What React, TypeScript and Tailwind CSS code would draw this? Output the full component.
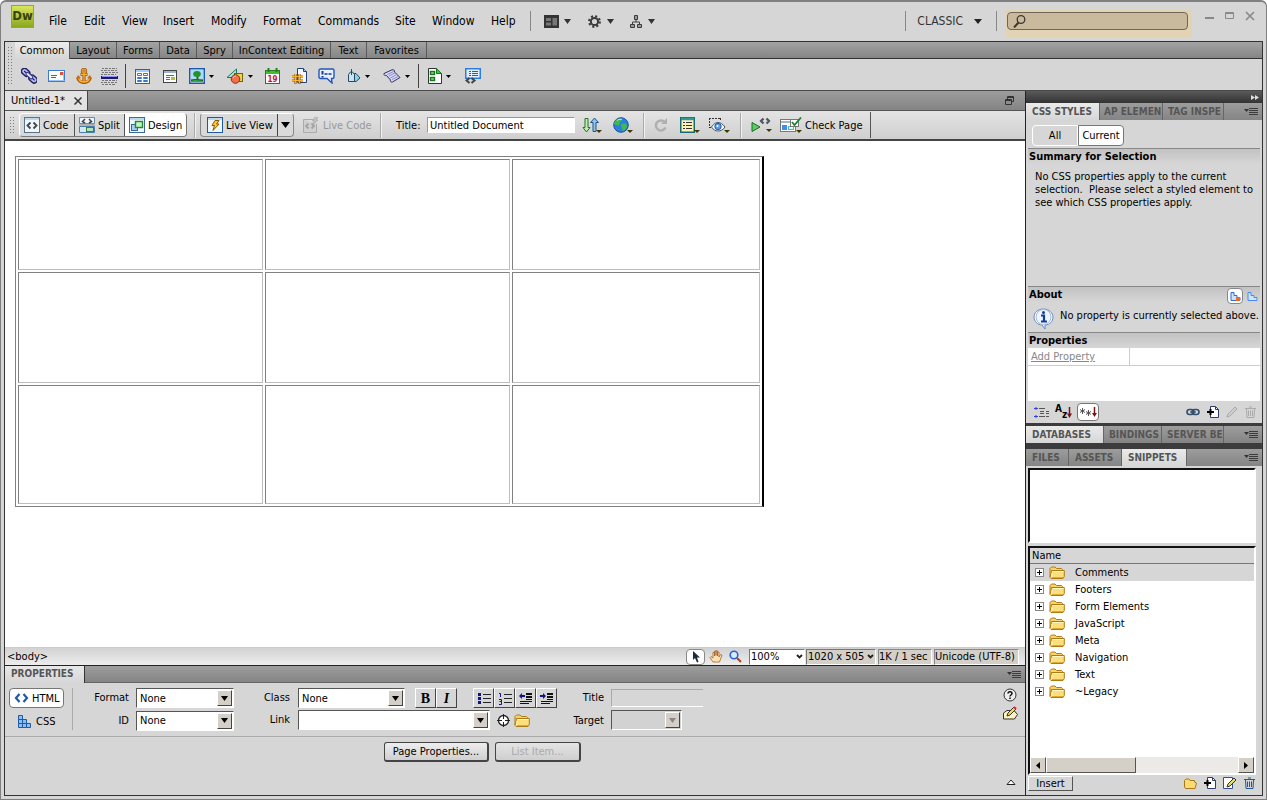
import { useState } from 'react'
import type { ReactNode } from 'react'

// ── Small building blocks ──────────────────────────────────────────────────

function Svg({ w, h, children, className = '' }: { w: number; h: number; children: ReactNode; className?: string }) {
  return (
    <svg width={w} height={h} viewBox={`0 0 ${w} ${h}`} fill="none" aria-hidden="true" className={`shrink-0 ${className}`}>
      {children}
    </svg>
  )
}

function Caret({ color = '#222', w = 7 }: { color?: string; w?: number }) {
  return (
    <Svg w={w} h={5}>
      <path d={`M0 0H${w}L${w / 2} 5Z`} fill={color} />
    </Svg>
  )
}

function Grip({ className }: { className: string }) {
  return <div className={`w-[6px] shrink-0 bg-[radial-gradient(circle,#7c7c7c_1px,transparent_1px)] bg-[size:3px_3px] ${className}`} />
}

function MenuLines() {
  return (
    <button type="button" aria-label="Panel menu" className="flex h-full w-[18px] shrink-0 items-center">
      <Svg w={15} h={9}>
        <path d="M0 2h5L2.5 5Z" fill="#333" />
        <path d="M5 1.5h9M5 3.5h9M5 5.5h9M5 7.5h9" stroke="#3c3c3c" />
      </Svg>
    </button>
  )
}

function Folder() {
  return (
    <Svg w={16} h={13}>
      <path d="M1 11V2.5L2.5 1H6l1.5 1.5h5L13.5 3.5V5" fill="#f7d469" stroke="#b17c14" />
      <path d="M1 11.5L2.5 4.5H15.3V10.5L14 12.5H2Z" fill="#fbdf7c" stroke="#b07a12" />
      <path d="M3.5 5.5h11M3 7v4" stroke="#fff6c9" />
      <path d="M3 11.5h11" stroke="#e0a92f" />
    </Svg>
  )
}

// ── Insert bar icons ───────────────────────────────────────────────────────

const LinkIcon = () => (
  <Svg w={16} h={16}>
    <g transform="rotate(42 8 8)">
      <rect x="-1.5" y="4.5" width="9" height="6" rx="3" fill="#b9bdf0" stroke="#20225e" strokeWidth="1.5" />
      <rect x="8.5" y="4.5" width="9" height="6" rx="3" fill="#b9bdf0" stroke="#20225e" strokeWidth="1.5" />
      <path d="M1 7.5h4M11 7.5h4" stroke="#20225e" strokeWidth="1.2" />
      <rect x="4" y="6" width="8" height="3" rx="1.5" fill="#e6e8ff" stroke="#33368c" />
    </g>
  </Svg>
)

const MailIcon = () => (
  <Svg w={17} h={12}>
    <rect x=".5" y=".5" width="16" height="11" fill="#fff" stroke="#3c7bd0" />
    <path d="M1 10.5h15.5M15.5 2v9" stroke="#9cc4f0" />
    <path d="M3 5.5h6M3 7.5h5" stroke="#3867ae" />
    <rect x="12" y="2" width="3" height="3" fill="#e8502a" />
  </Svg>
)

const AnchorIcon = () => (
  <Svg w={16} h={16}>
    <path d="M8 5v9M4.5 6.5h7M2 9.5c0 3 2.5 5 6 5s6-2 6-5" stroke="#a85708" strokeWidth="3.2" />
    <circle cx="8" cy="3" r="2" stroke="#a85708" strokeWidth="2.4" />
    <path d="M8 5v9M5 6.5h6M2.5 10c.5 2.5 2.5 4 5.5 4s5-1.500 5.500-4" stroke="#fbb034" strokeWidth="1.3" />
    <circle cx="8" cy="3" r="2" stroke="#fbb034" />
    <path d="M0 11l2-4 3 3ZM16 11l-2-4-3 3Z" fill="#c56c0c" />
  </Svg>
)

const RuleIcon = () => (
  <Svg w={17} h={17}>
    <path d="M1 .5h15M0 2.5h16M1 4.5h16M0 6.5h15M1 12.5h15M0 14.5h16M1 16.5h14" stroke="#777" strokeDasharray="2 1 3 1" />
    <rect y="8" width="17" height="3" fill="#1b1b6c" />
    <path d="M1 8.5h15" stroke="#8f8ff0" />
  </Svg>
)

const TableIcon = () => (
  <Svg w={15} h={15}>
    <rect x=".5" y=".5" width="14" height="14" fill="#fff" stroke="#2a62a6" />
    <path d="M1 2h13" stroke="#a9cdf2" strokeWidth="2" />
    <path d="M2.5 4.5h4v2h-4ZM8.5 4.5h4v2h-4ZM2.5 8.5h4v1h-4ZM8.5 8.5h4v1h-4ZM2.5 11.5h4v1h-4ZM8.5 11.5h4v1h-4Z" stroke="#3a78c4" />
  </Svg>
)

const DivIcon = () => (
  <Svg w={14} h={13}>
    <rect x=".5" y=".5" width="13" height="12" fill="#fff" stroke="#444" />
    <path d="M1 2h12" stroke="#9cb4cc" strokeWidth="2" />
    <path d="M3 5.5h8M3 7.5h4M3 9.5h4" stroke="#4a6b94" />
    <rect x="8" y="7" width="4" height="3" fill="#a6c436" />
  </Svg>
)

const ImageIcon = () => (
  <Svg w={16} h={16}>
    <rect x=".75" y=".75" width="14.5" height="14.5" fill="#fff" stroke="#1c57b0" strokeWidth="1.5" />
    <rect x="2" y="2" width="12" height="12" fill="#a8dcf8" />
    <path d="M2 11h12v3H2Z" fill="#31b03a" />
    <path d="M7.5 8h2v4h-2Z" fill="#6b4a1c" />
    <ellipse cx="8" cy="6" rx="3.8" ry="3" fill="#23922d" />
    <path d="M2 12.5l4-1 8 1" stroke="#146e1b" />
  </Svg>
)

const MediaIcon = () => (
  <Svg w={18} h={16}>
    <path d="M1 9.5L10.5 1v8.5Z" fill="#a9ecd2" stroke="#18775d" />
    <rect x="8.5" y="5.5" width="8" height="8" fill="#f0d74c" stroke="#6c6410" />
    <circle cx="9.5" cy="11" r="4.3" fill="#f26f4a" stroke="#8c2c14" />
    <path d="M7 10a3 3 0 0 1 3-2" stroke="#ffc2ae" />
  </Svg>
)

const DateIcon = () => (
  <Svg w={15} h={16}>
    <rect x=".5" y="2.5" width="14" height="13" fill="#fff" stroke="#2a7a1f" />
    <rect x="1" y="3" width="13" height="3" fill="#3fc02c" />
    <path d="M3.5 0v4M11.5 0v4" stroke="#2a7a1f" strokeWidth="2" />
    <text x="7.5" y="14" textAnchor="middle" fontSize="8" fontWeight="700" fill="#d21414" fontFamily="DejaVu Sans Condensed, sans-serif">
      19
    </text>
  </Svg>
)

const IncludeIcon = () => (
  <Svg w={15} h={16}>
    <path d="M5.5.5h6l3 3v11h-9Z" fill="#f3f7ff" stroke="#22407c" />
    <path d="M11.5.5v3h3" fill="#9cc0ee" stroke="#22407c" />
    <path d="M3.5 6v10M7.5 6v10M0 8.5h11M0 12.5h11" stroke="#9a5a00" strokeWidth="2.2" />
    <path d="M3.5 6v9.5M7.5 6v9.5M0 8.5h11M0 12.5h11" stroke="#f9b338" />
  </Svg>
)

const CommentIcon = () => (
  <Svg w={17} h={16}>
    <path d="M2.5 1h12Q16 1 16 2.5v6Q16 10.5 14.5 10.5h-1l.5 4.5-5-4.5H2.5Q1 10.5 1 9V2.5Q1 1 2.5 1Z" fill="#e6f0ff" stroke="#2356b8" strokeWidth="1.4" />
    <path d="M4.5 3v3.500M4.5 8v1.5" stroke="#123a94" strokeWidth="2" />
    <path d="M6.5 6h3M10.5 6h3" stroke="#123a94" strokeWidth="1.6" />
  </Svg>
)

const HeadIcon = () => (
  <Svg w={13} h={14}>
    <path d="M.5 5.5L2.5 3h2l2 2.5v7h-6Z" fill="#c6e6f6" stroke="#26495e" />
    <path d="M3.5 0v6" stroke="#26495e" />
    <path d="M6.5 4.5H8L12 9l-4 3.5H6.5Z" fill="#8fd0ee" stroke="#26495e" />
  </Svg>
)

const ScriptIcon = () => (
  <Svg w={18} h={14}>
    <path d="M1 4.5L9 .8c2-.5 3 1 2.5 2.2L17 8.5 9.5 13c-2 .5-2.5-1-2-2L3.5 6.5C2 7 .5 6 1 4.5Z" fill="#d5d6f6" stroke="#303258" />
    <path d="M4.5 5.5l6-3M6 7l6-3.2M7.5 9l6-3.5M9 10.5l6-3" stroke="#7a7cba" strokeWidth=".8" />
  </Svg>
)

const TemplateIcon = () => (
  <Svg w={14} h={16}>
    <path d="M.5.5h8l5 5v10H.5Z" fill="#fff" stroke="#333" />
    <path d="M8.5.5v5h5Z" fill="#45c14a" stroke="#17761c" />
    <rect x="2.5" y="3.5" width="4" height="3" fill="#7ddc7f" stroke="#17761c" strokeWidth="1.4" />
    <rect x="2.5" y="9.5" width="4" height="3" fill="#7ddc7f" stroke="#17761c" strokeWidth="1.4" />
  </Svg>
)

const TagIcon = () => (
  <Svg w={16} h={16}>
    <rect x=".75" y=".75" width="14.5" height="9.5" fill="#e4f2ff" stroke="#2b7de0" strokeWidth="1.5" />
    <path d="M4 3.5h2M7 3.5h6M4 5.5h2M7 5.5h6M4 7.5h2M7 7.5h6" stroke="#2a5da0" />
    <path d="M4.5 10L1.5 12.5l3 2.5M6.5 10l3 2.5-3 2.5" stroke="#444" strokeWidth="2" />
  </Svg>
)

// ── Document toolbar icons ─────────────────────────────────────────────────

function Page({ children, stroke = '#3a6a96' }: { children: ReactNode; stroke?: string }) {
  return (
    <Svg w={16} h={16}>
      <rect x=".5" y=".5" width="15" height="15" fill="#eef6fc" stroke={stroke} />
      <path d="M1 2h14" stroke="#bcd9ee" strokeWidth="2" />
      {children}
    </Svg>
  )
}

const CodeIcon = () => (
  <Page stroke="#58748c">
    <path d="M6.5 5.5L3.5 8.5l3 3M9.5 5.5l3 3-3 3" stroke="#444" strokeWidth="1.8" />
  </Page>
)

const LiveCodeIcon = () => (
  <Svg w={16} h={16}>
    <path d="M.5 2.5h10M13.5 7v8.5H.5v-13" fill="#d0d0d0" stroke="#aaa" />
    <path d="M5.5 6.5L3 9l2.5 2.5M8.5 6.5L11 9l-2.5 2.5" stroke="#a2a2a2" strokeWidth="1.8" />
    <path d="M12 0L9.5 4h2L10 7.5 15 3h-2l2-3Z" fill="#c4c4c4" stroke="#aaa" strokeWidth=".8" />
  </Svg>
)

const SplitIcon = () => (
  <Svg w={16} h={16}>
    <path d="M.5.5h15v6H.5Z" fill="#eaf4fa" stroke="#6b8ca5" />
    <path d="M6 2L3.5 4.5 6 6M10 2l2.5 2.5L10 6" stroke="#444" strokeWidth="1.5" />
    <path d="M.5 9.5h15v6H.5Z" fill="#d6e8f6" stroke="#4b7fae" />
    <rect x="7.5" y="10.5" width="7" height="4" fill="#b6e2b4" stroke="#2c8b37" />
    <path d="M0 8h16" stroke="#888" />
  </Svg>
)

const DesignIcon = () => (
  <Page>
    <rect x="2.5" y="7.5" width="6" height="6" fill="#a9cdef" stroke="#2f69a5" />
    <rect x="6.5" y="4.5" width="7" height="6" fill="#c9efc4" stroke="#1d8a2b" strokeWidth="1.4" />
  </Page>
)

const LiveIcon = () => (
  <Page stroke="#1d5c9a">
    <path d="M8 3.5L5 8.5h2.5L6 13.5 12 7H9.5L12 3.5Z" fill="#ffc92e" stroke="#8b5a00" />
  </Page>
)

const Drop = () => <path d="M0 0h6L3 3Z" fill="#3f3a00" />

const TransferIcon = () => (
  <Svg w={20} h={17}>
    <path d="M3 1.5h3v9h2L4.5 15 1 10.5h2Z" fill="#bff0b0" stroke="#27702a" />
    <path d="M11 14.5h3v-9h2.5L12.5 1 8.5 5.5H11Z" fill="#8ec3ee" stroke="#22568c" />
    <g transform="translate(14 13)">
      <Drop />
    </g>
  </Svg>
)

const GlobeIcon = () => (
  <Svg w={20} h={17}>
    <circle cx="8" cy="8" r="7.3" fill="#2c7fe0" stroke="#1c4fa0" />
    <path d="M3 3c3-2 6-1 6 0S6 5 6.5 7 4 8 2 7.5 1.5 5 3 3ZM9 7c3-1 5 0 5 2s-3 5-4 5-.5-2.5-1.5-4S8 7.5 9 7Z" fill="#3fbb48" />
    <path d="M4 3.5c2-1.5 4-1.5 5-1" stroke="#bfeaff" />
    <g transform="translate(14 13)">
      <Drop />
    </g>
  </Svg>
)

const RefreshIcon = () => (
  <Svg w={14} h={14}>
    <path d="M10.5 4A5 5 0 1 0 11.5 9.5" stroke="#b0b0b0" strokeWidth="2.5" />
    <path d="M13 0v6H7Z" fill="#b0b0b0" />
  </Svg>
)

const OptionsIcon = () => (
  <Svg w={20} h={17}>
    <rect x=".75" y=".75" width="13.5" height="14.5" fill="#fff2b8" stroke="#176b70" strokeWidth="1.5" />
    <path d="M1 2h13" stroke="#2f9a9c" strokeWidth="2.5" />
    <path d="M3 5.5h2M3 8.5h2M3 11.5h2M6 5.5h6M6 8.5h6M6 11.5h6" stroke="#333" strokeWidth="1.2" />
    <g transform="translate(14 13)">
      <Drop />
    </g>
  </Svg>
)

const AidsIcon = () => (
  <Svg w={22} h={17}>
    <path d="M1 1.5h12M1.5 1v10M12.5 1v3M1 10.5h3" stroke="#333" strokeDasharray="2 1" />
    <path d="M3.5 10C6 6.5 8 5.5 10 5.5s5 1.5 7 4.5c-2 3-4.5 4-7 4s-4.5-1-6.5-4Z" fill="#fff" stroke="#42515f" />
    <circle cx="10" cy="9.5" r="3.2" fill="#5aa0f0" stroke="#2457a8" />
    <circle cx="9.5" cy="9" r="1" fill="#fff" />
    <g transform="translate(16 13)">
      <Drop />
    </g>
  </Svg>
)

const ValidateIcon = () => (
  <Svg w={21} h={16}>
    <path d="M1 5.5l8 4.5-8 4.5Z" fill="#59cd5f" stroke="#1a6a22" />
    <path d="M12.5 1.5L10 4l2.5 2.5M15.5 1.5L18 4l-2.5 2.5" stroke="#4c5560" strokeWidth="2.2" />
    <g transform="translate(15 12)">
      <Drop />
    </g>
  </Svg>
)

const CheckPageIcon = () => (
  <Svg w={22} h={17}>
    <rect x=".5" y="2.5" width="15" height="12" fill="#fff" stroke="#777" />
    <path d="M1 5h14" stroke="#a5b5c2" strokeWidth="2" />
    <rect x="2" y="8" width="5" height="5" fill="#3f8ff0" />
    <rect x="8.5" y="9.5" width="5" height="3" fill="#e8fbff" stroke="#43b4e0" />
    <rect x="10.5" y="2.5" width="8" height="7" fill="#fff" stroke="#777" />
    <path d="M12 5l2.5 3L21 .5" stroke="#18862b" strokeWidth="1.8" />
    <g transform="translate(16 13)">
      <Drop />
    </g>
  </Svg>
)

// ── Data ───────────────────────────────────────────────────────────────────

const MENUS = [
  { label: 'File', width: 'w-[35px]' },
  { label: 'Edit', width: 'w-[38px]' },
  { label: 'View', width: 'w-[41px]' },
  { label: 'Insert', width: 'w-[48px]' },
  { label: 'Modify', width: 'w-[52px]' },
  { label: 'Format', width: 'w-[55px]' },
  { label: 'Commands', width: 'w-[77px]' },
  { label: 'Site', width: 'w-[37px]' },
  { label: 'Window', width: 'w-[59px]' },
  { label: 'Help', width: 'w-[39px]' },
]

const INSERT_TABS = [
  { label: 'Common', width: 'w-[55px]' },
  { label: 'Layout', width: 'w-[47px]' },
  { label: 'Forms', width: 'w-[43px]' },
  { label: 'Data', width: 'w-[37px]' },
  { label: 'Spry', width: 'w-[36px]' },
  { label: 'InContext Editing', width: 'w-[98px]' },
  { label: 'Text', width: 'w-[36px]' },
  { label: 'Favorites', width: 'w-[60px]' },
]

const INSERT_ITEMS = [
  { label: 'Hyperlink', icon: <LinkIcon />, width: 'w-[27px]' },
  { label: 'Email link', icon: <MailIcon />, width: 'w-[28px]' },
  { label: 'Named anchor', icon: <AnchorIcon />, width: 'w-[25px]' },
  { label: 'Horizontal rule', icon: <RuleIcon />, width: 'w-[24px]' },
  { label: 'Table', icon: <TableIcon />, width: 'w-[28px]', divider: true },
  { label: 'Insert div tag', icon: <DivIcon />, width: 'w-[26px]' },
  { label: 'Images', icon: <ImageIcon />, width: 'w-[37px]', caret: true },
  { label: 'Media', icon: <MediaIcon />, width: 'w-[39px]', caret: true },
  { label: 'Date', icon: <DateIcon />, width: 'w-[27px]' },
  { label: 'Server-side include', icon: <IncludeIcon />, width: 'w-[26px]' },
  { label: 'Comment', icon: <CommentIcon />, width: 'w-[30px]' },
  { label: 'Head', icon: <HeadIcon />, width: 'w-[35px]', caret: true },
  { label: 'Script', icon: <ScriptIcon />, width: 'w-[35px]', caret: true },
  { label: 'Templates', icon: <TemplateIcon />, width: 'w-[37px]', divider: true, caret: true },
  { label: 'Tag chooser', icon: <TagIcon />, width: 'w-[20px]' },
]

const SNIPPETS = ['Comments', 'Footers', 'Form Elements', 'JavaScript', 'Meta', 'Navigation', 'Text', '~Legacy']

const ROWS = ['h-[111px]', 'h-[111px]', 'h-[119px]']

// ── Header ─────────────────────────────────────────────────────────────────

function Header() {
  return (
    <header className="flex h-[39px] items-start pl-[7px]">
      <div className="mt-[3px] flex h-[23px] w-[23px] items-center justify-center border border-[#93ab2c] bg-linear-to-b from-[#d9e65a] to-[#8aa81c] pb-[3px] text-[13px] font-bold text-[#3a430f]">Dw</div>
      <nav className="mt-[9px] ml-[15px] flex h-[20px] text-[12px]">
        {MENUS.map((m) => (
          <button key={m.label} type="button" className={`shrink-0 text-left ${m.width}`}>
            {m.label}
          </button>
        ))}
      </nav>
      <div className="mt-[9px] flex h-5 items-center border-l border-[#888] pl-[13px]">
        <button type="button" aria-label="Layout" className="flex w-[44px] items-center gap-[5px]">
          <Svg w={15} h={13}>
            <rect x=".5" y=".5" width="14" height="12" fill="#333" stroke="#333" />
            <path d="M2 3h5v3H2ZM2 7.5h5v3H2ZM8.5 3H13v7.5H8.5Z" fill="#777" />
          </Svg>
          <Caret color="#333" />
        </button>
        <button type="button" aria-label="Extensions" className="flex w-[42px] items-center gap-[6px]">
          <Svg w={13} h={13}>
            <circle cx="6.5" cy="6.5" r="5.3" stroke="#3c3c3c" strokeWidth="2.2" strokeDasharray="2.1 2.06" />
            <circle cx="6.5" cy="6.5" r="3.6" stroke="#3c3c3c" strokeWidth="2" />
          </Svg>
          <Caret color="#333" />
        </button>
        <button type="button" aria-label="Site" className="flex items-center gap-[6px]">
          <Svg w={12} h={13}>
            <path d="M4.5.5h3v4h-3ZM.5 9.5h4v3h-4ZM7.5 9.5h4v3h-4Z" fill="#999" stroke="#3c3c3c" />
            <path d="M6 5v2M2.5 9V7h7v2" stroke="#3c3c3c" />
          </Svg>
          <Caret color="#333" />
        </button>
      </div>
      <div className="mt-[9px] ml-auto flex h-5 shrink-0 items-center border-l border-[#888] pr-[14px] pl-[11px] text-[12px] text-[#333]">
        <button type="button" className="flex items-center gap-[11px] whitespace-nowrap">
          CLASSIC <Caret color="#222" w={8} />
        </button>
      </div>
      <span className="mt-[9px] h-5 w-px shrink-0 bg-[#888]" />
      <label className="mt-2 ml-[9px] flex h-[28px] w-[186px] shrink-0 items-start bg-[#e3d3b5] pt-[2px] pl-px">
        <span className="flex h-[18px] w-[181px] items-center rounded-sm border border-[#6f6657] bg-[#c9b99d] pl-[5px]">
          <Svg w={13} h={13}>
            <circle cx="8" cy="4.5" r="3.8" stroke="#3e382c" strokeWidth="1.3" />
            <path d="M5.5 7.5L1 12.5" stroke="#3e382c" strokeWidth="2" />
          </Svg>
          <input aria-label="Search" className="min-w-0 flex-1 bg-transparent px-1 outline-none" />
        </span>
      </label>
      <div className="mt-2 mr-[8px] ml-[13px] flex shrink-0 gap-[10px]">
        <button type="button" aria-label="Minimize">
          <Svg w={10} h={12}>
            <path d="M0 8h9" stroke="#888" strokeWidth="2" />
          </Svg>
        </button>
        <button type="button" aria-label="Maximize">
          <Svg w={10} h={12}>
            <path d="M.5 2.5h8v6h-8ZM1 3.5h8" stroke="#888" />
          </Svg>
        </button>
        <button type="button" aria-label="Close">
          <Svg w={10} h={12}>
            <path d="M1 2l8 8M9 2l-8 8" stroke="#888" strokeWidth="1.6" />
          </Svg>
        </button>
      </div>
    </header>
  )
}

// ── Insert bar ─────────────────────────────────────────────────────────────

function InsertBar() {
  return (
    <div className="flex h-[49px] border-b border-[#4a4a4a]">
      <Grip className="mx-[2px] my-1" />
      <div className="min-w-0 flex-1">
        <div className="flex h-[17px] border-b border-[#333] bg-linear-to-b from-[#a3a3a3] to-[#858585]">
          {INSERT_TABS.map((t, i) => (
            <button
              key={t.label}
              type="button"
              className={`shrink-0 border-r border-[#5a5a5a] text-center ${t.width} ${i === 0 ? 'h-[17px] bg-linear-to-b from-[#ececec] to-[#d6d6d6]' : ''}`}
            >
              {t.label}
            </button>
          ))}
        </div>
        <div className="flex h-[34px] items-center pl-[6px]">
          {INSERT_ITEMS.map((it) => (
            <div key={it.label} className="flex shrink-0 items-center">
              {it.divider && <span className="mr-[9px] h-6 w-px bg-[#444]" />}
              <button type="button" aria-label={it.label} className={`flex items-center gap-[4px] ${it.width}`}>
                {it.icon}
                {it.caret && (
                  <Svg w={5} h={3}>
                    <path d="M0 0h5L2.5 3Z" fill="#000" />
                  </Svg>
                )}
              </button>
            </div>
          ))}
        </div>
      </div>
    </div>
  )
}

// ── Document area ──────────────────────────────────────────────────────────

const Groove = () => <span className="h-[25px] w-[2px] shrink-0 border-l border-[#aaa] bg-[#f2f2f2]" />

function DocToolbar() {
  const [view, setView] = useState('Design')
  const views = [
    { label: 'Code', icon: <CodeIcon />, width: 'w-[54px]' },
    { label: 'Split', icon: <SplitIcon />, width: 'w-[50px]' },
    { label: 'Design', icon: <DesignIcon />, width: 'w-[62px]' },
  ]
  return (
    <div className="flex h-[30px] items-center border-b-2 border-[#444] bg-linear-to-b from-[#e4e4e4] to-[#cfcfcf]">
      <Grip className="mx-1 h-[18px]" />
      <div className="flex h-6 shrink-0 overflow-hidden rounded-sm border border-t-white border-r-[#777] border-b-[#777] border-l-white bg-[#dadada]">
        {views.map((v) => (
          <button
            key={v.label}
            type="button"
            onClick={() => setView(v.label)}
            className={`flex items-center gap-[3px] border-l border-[#555] pl-[4px] first:border-l-0 ${v.width} ${view === v.label ? 'bg-white' : ''}`}
          >
            {v.icon}
            {v.label}
          </button>
        ))}
      </div>
      <span className="w-[7px] shrink-0" />
      <Groove />
      <div className="ml-[4px] flex h-6 shrink-0 rounded-sm border border-t-white border-r-[#888] border-b-[#888] border-l-[#888] bg-[#dadada]">
        <button type="button" className="flex w-[76px] items-center gap-[3px] pl-[6px]">
          <LiveIcon />
          <span className="whitespace-nowrap">Live View</span>
        </button>
        <button type="button" aria-label="Live view options" className="flex w-[16px] items-center justify-center border-l border-[#444]">
          <Svg w={9} h={6}>
            <path d="M0 0h9L4.5 6Z" fill="#000" />
          </Svg>
        </button>
      </div>
      <button type="button" disabled className="ml-[9px] flex w-[77px] shrink-0 items-center gap-[4px] text-[#999]">
        <LiveCodeIcon />
        <span className="whitespace-nowrap">Live Code</span>
      </button>
      <Groove />
      <label htmlFor="doc-title" className="ml-[14px] w-[31px] shrink-0">
        Title:
      </label>
      <input id="doc-title" defaultValue="Untitled Document" className="h-4 w-[148px] shrink-0 border border-t-[#999] border-l-[#999] border-r-white border-b-white bg-white px-[2px] outline-none" />
      <div className="ml-[7px] flex shrink-0 items-center">
        <button type="button" aria-label="File management" className="w-[31px]">
          <TransferIcon />
        </button>
        <button type="button" aria-label="Preview in browser" className="w-[30px]">
          <GlobeIcon />
        </button>
        <Groove />
        <button type="button" aria-label="Refresh" className="ml-[9px] w-[26px]">
          <RefreshIcon />
        </button>
        <button type="button" aria-label="View options" className="w-[28px]">
          <OptionsIcon />
        </button>
        <button type="button" aria-label="Visual aids" className="w-[32px]">
          <AidsIcon />
        </button>
        <Groove />
        <button type="button" aria-label="Validate markup" className="ml-[9px] w-[29px]">
          <ValidateIcon />
        </button>
        <button type="button" className="flex w-[90px] items-center gap-[3px] whitespace-nowrap">
          <CheckPageIcon />
          Check Page
        </button>
        <span className="h-[26px] w-px bg-[#555]" />
      </div>
    </div>
  )
}

function Canvas() {
  return (
    <main className="flex-1 bg-white pt-[15px] pl-[10px]">
      <table className="w-[749px] table-fixed border-separate border-spacing-[2px] border border-r-2 border-[#808080] border-r-black">
        <colgroup>
          <col className="w-[245px]" />
          <col className="w-[245px]" />
          <col />
        </colgroup>
        <tbody>
          {ROWS.map((h, r) => (
            <tr key={r}>
              {[0, 1, 2].map((c) => (
                <td key={c} className={`border border-t-[#808080] border-r-[#bdbdbd] border-b-[#bdbdbd] border-l-[#808080] ${h}`} />
              ))}
            </tr>
          ))}
        </tbody>
      </table>
    </main>
  )
}

function StatusBar() {
  const box = 'h-4 shrink-0 border border-t-[#888] border-l-[#888] border-r-white border-b-white bg-[#d4d0c8] leading-[14px] whitespace-nowrap'
  return (
    <div className="flex h-[18px] items-center border-t border-[#cfccc0] bg-linear-to-b from-[#d2d2d2] to-[#ededed] pr-[6px]">
      <button type="button" className="pl-[2px]">
        &lt;body&gt;
      </button>
      <div className="ml-auto flex items-center">
        <button type="button" aria-label="Select tool" className="mr-1 flex h-4 w-[19px] items-center justify-center rounded-sm border border-[#888] bg-white">
          <Svg w={8} h={12}>
            <path d="M1 0v9l2-2 2 4.5 1.5-.5L5 6.5h3Z" fill="#1d2b3c" />
          </Svg>
        </button>
        <button type="button" aria-label="Hand tool" className="mr-[6px]">
          <Svg w={14} h={13}>
            <path d="M4 12L1 7.5l1-1L4 8V2.5h1.5V6 1H7v4.5V.8h1.5V6 2H10v5l1.5-2.5 1.5.5L10.5 12Z" fill="#ffe0b5" stroke="#a8632a" strokeWidth=".8" />
          </Svg>
        </button>
        <button type="button" aria-label="Zoom tool" className="mr-[7px]">
          <Svg w={13} h={13}>
            <circle cx="5" cy="5" r="3.8" fill="#d7ecff" stroke="#2a62d8" strokeWidth="1.6" />
            <path d="M8 8l4 4" stroke="#a04a28" strokeWidth="2.2" />
          </Svg>
        </button>
        <MiniSelect label="Zoom" value="100%" className="w-[56px] bg-white" />
        <MiniSelect label="Window size" value="1020 x 505" className="ml-px w-[70px] bg-[#d4d0c8]" />
        <span className={`ml-[2px] w-[54px] ${box}`}>1K / 1 sec</span>
        <span className={`ml-[2px] w-[85px] ${box}`}>Unicode (UTF-8)</span>
      </div>
    </div>
  )
}

function MiniSelect({ label, value, className }: { label: string; value: string; className: string }) {
  return (
    <span className={`relative flex h-4 shrink-0 items-center border border-t-[#777] border-l-[#777] border-r-white border-b-white ${className}`}>
      <select aria-label={label} className="h-full w-full appearance-none bg-transparent pl-px leading-[14px] outline-none">
        <option>{value}</option>
      </select>
      <span className="pointer-events-none absolute right-px">
        <Svg w={7} h={5}>
          <path d="M1 1l2.5 2.5L6 1" stroke="#222" strokeWidth="1.8" />
        </Svg>
      </span>
    </span>
  )
}

// ── Property inspector ─────────────────────────────────────────────────────

interface ComboProps {
  id: string
  value?: string
  className: string
  disabled?: boolean
}

function Combo({ id, value = '', className, disabled = false }: ComboProps) {
  return (
    <span
      className={`relative flex h-5 shrink-0 border border-t-[#555] border-l-[#555] border-r-white border-b-white ${className} ${disabled ? 'bg-[#d2d2d2]' : 'bg-white'}`}
    >
      <select id={id} disabled={disabled} className="h-full w-full appearance-none bg-transparent pl-[3px] outline-none">
        <option>{value}</option>
      </select>
      <span className="pointer-events-none absolute top-px right-px flex h-4 w-[15px] items-center justify-center border border-t-white border-l-white border-r-[#444] border-b-[#444] bg-[#d4d0c8]">
        <Caret color={disabled ? '#888' : '#000'} />
      </span>
    </span>
  )
}

function ListIcon({ kind }: { kind: string }) {
  return (
    <Svg w={14} h={13}>
      {kind === 'ul' && <path d="M1 2.5h3M1 6.5h3M1 10.5h3" stroke="#11118a" strokeWidth="3" />}
      {kind === 'ol' && <path d="M1 1.5h1.5V5M1 7.5h2.5v2H1.5M3.5 9.5v3H1" stroke="#11118a" />}
      {(kind === 'ul' || kind === 'ol') && <path d="M6 2.5h8M6 6.5h8M6 10.5h8" stroke="#222" />}
      {(kind === 'out' || kind === 'in') && <path d="M7 2h6M7 5h6" stroke="#111" strokeWidth="2" />}
      {(kind === 'out' || kind === 'in') && <path d="M7 7.5h6M1 9.5h12M1 11.5h9" stroke="#111" />}
      {kind === 'out' && <path d="M0 4l3-3v2h3v2H3v2Z" fill="#11118a" />}
      {kind === 'in' && <path d="M6 4L3 1v2H0v2h3v2Z" fill="#11118a" />}
    </Svg>
  )
}

function PropertyInspector() {
  const toolBtn = 'flex h-5 w-[21px] items-center justify-center border border-t-white border-l-white border-r-[#444] border-b-[#444]'
  return (
    <section className="border-t border-[#222]">
      <div className="flex h-[17px] border-b border-[#666] bg-linear-to-b from-[#9d9d9d] to-[#848484]">
        <h2 className="h-[17px] w-[80px] border-r border-[#333] bg-linear-to-b from-[#e8e8e8] to-[#d6d6d6] pl-[6px] text-[10px] leading-[16px] font-bold text-[#555]">PROPERTIES</h2>
        <div className="ml-auto">
          <MenuLines />
        </div>
      </div>
      <div className="flex h-[54px] border-b border-[#aaa] pt-[5px]">
        <div className="mr-[8px] ml-1 flex w-[55px] shrink-0 flex-col">
          <button type="button" className="flex h-[20px] items-center gap-[3px] rounded-sm border border-[#777] bg-white pl-[4px]">
            <Svg w={15} h={10}>
              <path d="M5.5 1L2 5l3.5 4M9.5 1L13 5 9.5 9" stroke="#1f5aa6" strokeWidth="2.2" />
            </Svg>
            HTML
          </button>
          <button type="button" className="mt-1 flex h-[18px] items-center gap-1 pl-[9px]">
            <Svg w={14} h={13}>
              <path d="M.5.5h4v4h-4ZM.5 4.5h4v4h-4ZM.5 8.5h4v4h-4ZM4.5 4.5h4v4h-4ZM4.5 8.5h4v4h-4ZM8.5 8.5h4v4h-4Z" fill="#8cbdf0" stroke="#1f5aa6" />
            </Svg>
            CSS
          </button>
        </div>
        <span className="h-[42px] w-px shrink-0 bg-[#aaa]" />
        <div className="grid h-[43px] shrink-0 grid-cols-[56px_98px] gap-x-[7px] gap-y-[2px]">
          <label htmlFor="format" className="text-right leading-[20px]">
            Format
          </label>
          <Combo id="format" value="None" className="w-[98px]" />
          <label htmlFor="el-id" className="text-right leading-[20px]">
            ID
          </label>
          <Combo id="el-id" value="None" className="w-[98px]" />
        </div>
        <div className="flex h-[43px] w-[239px] shrink-0 flex-col gap-[2px]">
          <div className="flex">
            <label htmlFor="class" className="mr-[8px] w-[56px] shrink-0 text-right leading-[20px]">
              Class
            </label>
            <Combo id="class" value="None" className="w-[107px]" />
            <div className="ml-[10px] flex">
              <button type="button" className={`font-['Liberation_Serif',serif] text-[14px] font-bold ${toolBtn}`}>
                B
              </button>
              <button type="button" className={`font-['Liberation_Serif',serif] text-[14px] font-bold italic ${toolBtn}`}>
                I
              </button>
            </div>
          </div>
          <div className="flex items-center">
            <label htmlFor="link" className="mr-[8px] w-[56px] shrink-0 text-right leading-[20px]">
              Link
            </label>
            <Combo id="link" className="w-[192px]" />
          </div>
        </div>
        <div className="flex h-[43px] w-[84px] shrink-0 flex-col gap-[2px]">
          <div className="flex">
            {['ul', 'ol', 'out', 'in'].map((k) => (
              <button key={k} type="button" aria-label={k} className={toolBtn}>
                <ListIcon kind={k} />
              </button>
            ))}
          </div>
          <div className="flex h-[22px] items-center gap-[4px] pl-[24px]">
            <button type="button" aria-label="Point to file">
              <Svg w={13} h={13}>
                <circle cx="6.5" cy="6.5" r="5" fill="#fff" stroke="#222" strokeWidth="1.3" />
                <path d="M6.5 0v5M6.5 8v5M0 6.5h5M8 6.5h5" stroke="#222" />
              </Svg>
            </button>
            <button type="button" aria-label="Browse for file">
              <Folder />
            </button>
          </div>
        </div>
        <div className="grid h-[43px] shrink-0 grid-cols-[47px_92px] gap-x-[7px] gap-y-[2px]">
          <label htmlFor="el-title" className="text-right leading-[20px]">
            Title
          </label>
          <input id="el-title" className="mt-px h-[18px] border border-r-0 border-t-[#aaa] border-l-[#aaa] border-b-white bg-transparent px-1 outline-none" />
          <label htmlFor="target" className="text-right leading-[22px]">
            Target
          </label>
          <Combo id="target" className="w-[71px]" disabled />
        </div>
        <div className="mr-[7px] ml-auto flex flex-col gap-[4px]">
          <button type="button" aria-label="Help">
            <Svg w={14} h={14}>
              <circle cx="7" cy="7" r="6" fill="#eee" stroke="#333" />
              <path d="M5 5.5C5 3 9 3 9 5.5 9 7 7 7 7 8.5M7 9.5V11" stroke="#111" strokeWidth="1.5" />
            </Svg>
          </button>
          <button type="button" aria-label="Quick tag editor">
            <Svg w={15} h={14}>
              <path d="M.5 7L4 4.5h7l3.5 4-3 4.5H.5Z" fill="#fbf3bd" stroke="#333" />
              <path d="M4 10l1-3 6-6 2 2-6 6Z" fill="#ffd84a" stroke="#333" />
              <path d="M11 1l2 2" stroke="#d23" strokeWidth="2" />
            </Svg>
          </button>
        </div>
      </div>
      <div className="flex h-[58px] justify-between pr-[9px]">
        <div className="ml-[379px] flex gap-[6px] pt-[5px]">
          <button type="button" className="h-5 w-[105px] rounded-[3px] border border-r-2 border-b-2 border-[#444] bg-linear-to-b from-[#eee] to-[#cfcfcf] whitespace-nowrap">
            Page Properties...
          </button>
          <button type="button" disabled className="h-5 w-[86px] rounded-[3px] border border-r-2 border-b-2 border-[#444] bg-linear-to-b from-[#e4e4e4] to-[#cfcfcf] text-[#aaa]">
            List Item...
          </button>
        </div>
        <button type="button" aria-label="Collapse" className="mb-[10px] self-end">
          <Svg w={10} h={6}>
            <path d="M1 5.5L5 1l4 4.5Z" fill="#fff" stroke="#222" />
          </Svg>
        </button>
      </div>
    </section>
  )
}

// ── Right dock ─────────────────────────────────────────────────────────────

interface DockTab {
  label: string
  width: string
}

function DockTabs({ tabs, active }: { tabs: DockTab[]; active: number }) {
  return (
    <div className="flex h-[17px] bg-linear-to-b from-[#9d9d9d] to-[#848484] text-[10px] font-bold text-[#555]">
      {tabs.map((t, i) => (
        <button
          key={t.label}
          type="button"
          className={`shrink-0 border-r border-[#666] text-left whitespace-nowrap ${t.width} ${i === active ? 'bg-linear-to-b from-[#eaeaea] to-[#d6d6d6]' : ''}`}
        >
          {t.label}
        </button>
      ))}
      <div className="ml-auto">
        <MenuLines />
      </div>
    </div>
  )
}

function SectionTitle({ children }: { children: ReactNode }) {
  return <h3 className="border-t border-[#888] bg-linear-to-b from-[#c2c2c2] to-[#d6d6d6] pl-px text-[11px] leading-[15px] font-bold">{children}</h3>
}

function CssPanel() {
  return (
    <section>
      <DockTabs
        active={0}
        tabs={[
          { label: 'CSS STYLES', width: 'w-[74px] pl-[6px]' },
          { label: 'AP ELEMEN', width: 'w-[63px] pl-[4px]' },
          { label: 'TAG INSPE', width: 'w-[61px] pl-[5px]' },
        ]}
      />
      <div className="px-[2px]">
        <div className="flex h-[28px] pt-[5px] pl-1">
          <button type="button" className="h-[21px] w-[46px] rounded-l-sm border border-white text-center">
            All
          </button>
          <button type="button" className="h-[21px] w-[46px] rounded-r-sm border border-[#777] bg-white text-center">
            Current
          </button>
        </div>
        <SectionTitle>Summary for Selection</SectionTitle>
        <p className="h-[122px] pt-[6px] pl-[7px] leading-[13px] whitespace-pre-line">
          {'No CSS properties apply to the current\nselection.\u00a0 Please select a styled element to\nsee which CSS properties apply.'}
        </p>
        <div className="relative">
          <SectionTitle>About</SectionTitle>
          <div className="absolute top-[2px] right-0 flex gap-px">
            <button type="button" aria-label="Show information" className="flex h-4 w-4 items-center justify-center rounded-sm border border-[#888] bg-white">
              <Svg w={11} h={11}>
                <path d="M1 1.5h3v3h3v2h3v3H1Z" fill="#cfe2ff" stroke="#2a6be0" />
                <rect x="6" y="6" width="4" height="4" fill="#f26a1c" />
              </Svg>
            </button>
            <button type="button" aria-label="Show rules" className="flex h-4 w-4 items-center justify-center">
              <Svg w={11} h={11}>
                <path d="M1 1.5h3v3h3v2h3v3H1Z" fill="#cfe2ff" stroke="#4a8af0" />
              </Svg>
            </button>
          </div>
        </div>
        <div className="flex h-[30px] pl-[5px]">
          <Svg w={21} h={22} className="mt-[6px]">
            <path d="M10.5 1C5 1 1 4.5 1 9s4 8 8 8l3 4v-4c5 0 8-4 8-8s-4-8-9.5-8Z" fill="#fff" stroke="#6a86b8" />
            <circle cx="10.5" cy="9" r="7.5" fill="#eef5ff" stroke="#9db8e4" />
            <path d="M8 7.5h3V13M8 13.5h6" stroke="#153a9a" strokeWidth="2.2" />
            <circle cx="10.5" cy="4.5" r="1.5" fill="#153a9a" />
          </Svg>
          <p className="pt-[6px] pl-[6px] whitespace-nowrap">No property is currently selected above.</p>
        </div>
        <SectionTitle>Properties</SectionTitle>
        <div className="h-[53px] bg-white">
          <table className="w-full table-fixed border-b border-[#ccc]">
            <tbody>
              <tr>
                <td className="w-[101px] border-r border-[#ccc] p-0 pl-[3px] leading-[17px]">
                  <a href="#add" className="text-[#888] underline">
                    Add Property
                  </a>
                </td>
                <td className="p-0" />
              </tr>
            </tbody>
          </table>
        </div>
        <div className="flex h-[22px] items-center justify-between pr-[3px] pl-[6px]">
          <div className="flex items-center gap-[5px]">
            <button type="button" aria-label="Category view">
              <Svg w={16} h={11}>
                <path d="M0 1.5h4M2 0v3M0 9.5h4M2 8v3" stroke="#2c4bd0" />
                <path d="M5 1.5h6M12 4.5h3M6 4.5h4M6 6.5h4M5 9.5h6M12 6.5h3M12 9.5h3" stroke="#555" />
              </Svg>
            </button>
            <button type="button" aria-label="List view" className="flex h-4 items-center text-[10px] leading-none font-bold">
              <span className="self-start">A</span>
              <span className="self-end">z</span>
              <Svg w={5} h={11}>
                <path d="M2.5 0v8" stroke="#801010" strokeWidth="1.5" />
                <path d="M0 6.5h5L2.5 11Z" fill="#801010" />
              </Svg>
            </button>
            <button type="button" aria-label="Set properties" className="flex h-[18px] w-[22px] items-center justify-center rounded-sm border border-[#777] bg-white">
              <Svg w={18} h={12}>
                <path d="M3.5 2v6M1 3.5l5 3M6 3.5l-5 3M9.5 4v6M7 5.5l5 3M12 5.5l-5 3" stroke="#444" strokeWidth=".9" />
                <path d="M15.5 1v7" stroke="#801010" strokeWidth="1.5" />
                <path d="M13 7h5l-2.5 4Z" fill="#801010" />
              </Svg>
            </button>
          </div>
          <div className="flex items-center gap-[7px]">
            <button type="button" aria-label="Attach style sheet">
              <Svg w={14} h={9}>
                <rect x="1" y="1.5" width="7" height="5" rx="2.5" stroke="#34506e" strokeWidth="1.6" />
                <rect x="6" y="1.5" width="7" height="5" rx="2.5" stroke="#34506e" strokeWidth="1.6" />
                <path d="M4 4h6" stroke="#34506e" strokeWidth="1.2" />
              </Svg>
            </button>
            <NewPageButton />
            <button type="button" aria-label="Edit rule" disabled>
              <Svg w={12} h={12}>
                <path d="M1 11l1-3 7-7 2 2-7 7Z" fill="#ccc" stroke="#aaa" />
              </Svg>
            </button>
            <TrashButton color="#aaa" />
          </div>
        </div>
      </div>
    </section>
  )
}

function NewPageButton() {
  return (
    <button type="button" aria-label="New">
      <Svg w={12} h={12}>
        <path d="M3.5.5h5l3 3v8h-8Z" fill="#fff" stroke="#2b3d6e" />
        <path d="M8.5.5v3h3" stroke="#2b3d6e" />
        <path d="M0 6h7M3.5 3v6" stroke="#000" strokeWidth="2" />
      </Svg>
    </button>
  )
}

function TrashButton({ color }: { color: string }) {
  return (
    <button type="button" aria-label="Delete">
      <Svg w={12} h={12}>
        <path d="M0 2.5h11M4 1h3M1.5 3l.5 8.5h7l.5-8.5M3.5 4.5v5.5M5.5 4.5v5.5M7.5 4.5v5.5" stroke={color} />
      </Svg>
    </button>
  )
}

function SnippetsPanel() {
  return (
    <section className="flex flex-1 flex-col">
      <DockTabs
        active={2}
        tabs={[
          { label: 'FILES', width: 'w-[43px] pl-[6px]' },
          { label: 'ASSETS', width: 'w-[53px] pl-[6px]' },
          { label: 'SNIPPETS', width: 'w-[65px] pl-[6px]' },
        ]}
      />
      <div className="mt-[2px] mr-[6px] ml-[2px] h-[75px] border-2 border-t-[#111] border-l-[#111] border-r-white border-b-white bg-white" />
      <div className="mt-[3px] mr-[6px] ml-[2px] flex flex-1 flex-col border-2 border-t-[#111] border-l-[#111] border-r-white border-b-white bg-white">
        <div className="h-4 border-b border-[#777] bg-[#d6d6d6] pl-[2px] leading-[15px]">Name</div>
        <ul className="flex-1">
          {SNIPPETS.map((name, i) => (
            <li key={name} className={`flex h-[17px] items-center pl-[5px] ${i === 0 ? 'bg-[#d6d6d6]' : ''}`}>
              <button type="button" aria-label={`Expand ${name}`} className="mr-[5px]">
                <Svg w={9} h={9}>
                  <rect x=".5" y=".5" width="8" height="8" fill="#fff" stroke="#888" />
                  <path d="M2 4.5h5M4.5 2v5" stroke="#000" />
                </Svg>
              </button>
              <Folder />
              <span className="ml-[10px]">{name}</span>
            </li>
          ))}
        </ul>
        <div className="flex h-4 bg-[#eceae6]">
          <button type="button" aria-label="Scroll left" className="flex w-4 items-center justify-center border border-t-white border-l-white border-r-[#555] border-b-[#555] bg-[#d4d0c8]">
            <Svg w={4} h={7}>
              <path d="M4 0v7L0 3.5Z" fill="#000" />
            </Svg>
          </button>
          <div className="w-[90px] border border-t-white border-l-white border-r-[#555] border-b-[#555] bg-[#d4d0c8]" />
          <button type="button" aria-label="Scroll right" className="ml-auto flex w-4 items-center justify-center border border-t-white border-l-white border-r-[#555] border-b-[#555] bg-[#d4d0c8]">
            <Svg w={4} h={7}>
              <path d="M0 0v7L4 3.5Z" fill="#000" />
            </Svg>
          </button>
        </div>
      </div>
      <div className="flex h-[20px] items-start justify-between pr-[6px] pl-[2px]">
        <button type="button" className="mt-px h-[15px] w-[45px] border border-t-white border-l-white border-r-[#555] border-b-[#555] leading-[13px]">
          Insert
        </button>
        <div className="mt-[2px] flex items-center gap-[7px]">
          <button type="button" aria-label="New snippet folder">
            <Svg w={13} h={11}>
              <path d="M.5 9V2.5L2 1h3l1 1.5h4.5V4L12.5 5l-1.5 5.5H1.5Z" fill="#fbdc72" stroke="#a9781a" />
            </Svg>
          </button>
          <NewPageButton />
          <button type="button" aria-label="Edit snippet">
            <Svg w={14} h={12}>
              <path d="M.5.5h9v11h-9Z" fill="#fff" stroke="#34508c" />
              <path d="M4 10l1-3 6-6 2 2-6 6Z" fill="#e6dc6a" stroke="#333" />
            </Svg>
          </button>
          <TrashButton color="#1f5a94" />
        </div>
      </div>
    </section>
  )
}

// ── App ────────────────────────────────────────────────────────────────────

export default function App() {
  return (
    <div className="flex min-h-screen flex-col rounded-t-md border border-t-2 border-[#808080] bg-[#d6d6d6] px-[3px] pb-[3px] font-['DejaVu_Sans_Condensed','Noto_Sans',sans-serif] text-[11px] leading-[15px] text-black">
      <Header />
      <div className="flex flex-1 flex-col border border-[#333]">
        <InsertBar />
        <div className="flex flex-1">
          <div className="flex min-w-0 flex-1 flex-col border-r border-[#222]">
            <div className="flex h-[20px] items-stretch justify-between border-b border-[#555] bg-linear-to-b from-[#9d9d9d] to-[#848484]">
              <div className="flex w-[83px] items-center justify-between border-r border-[#444] bg-[#e2e2e2] pr-[5px] pl-[6px]">
                Untitled-1*
                <button type="button" aria-label="Close document">
                  <Svg w={8} h={8}>
                    <path d="M.5.5l7 7M7.5.5l-7 7" stroke="#333" strokeWidth="1.5" />
                  </Svg>
                </button>
              </div>
              <button type="button" aria-label="Restore" className="mr-[11px]">
                <Svg w={9} h={9}>
                  <path d="M.5 3.5h6v5h-6ZM.5 4.5h6M2.5 3V.5h6v5H7M2.5 1.5h6" stroke="#333" />
                </Svg>
              </button>
            </div>
            <DocToolbar />
            <Canvas />
            <StatusBar />
            <PropertyInspector />
          </div>
          <aside className="flex w-[236px] shrink-0 flex-col">
            <div className="flex h-[12px] items-center justify-end bg-linear-to-b from-[#5a5a5a] to-[#333] pr-[3px]">
              <button type="button" aria-label="Collapse panels" className="flex">
                <Svg w={8} h={5}>
                  <path d="M0 0l4 2.5L0 5ZM4 0l4 2.5L4 5Z" fill="#ddd" />
                </Svg>
              </button>
            </div>
            <CssPanel />
            <div className="h-[3px] bg-[#3c3c3c]" />
            <DockTabs
              active={0}
              tabs={[
                { label: 'DATABASES', width: 'w-[78px] pl-[6px]' },
                { label: 'BINDINGS', width: 'w-[58px] pl-[5px]' },
                { label: 'SERVER BE', width: 'w-[62px] pl-[5px]' },
              ]}
            />
            <div className="h-[6px] bg-[#3c3c3c]" />
            <SnippetsPanel />
          </aside>
        </div>
      </div>
    </div>
  )
}
